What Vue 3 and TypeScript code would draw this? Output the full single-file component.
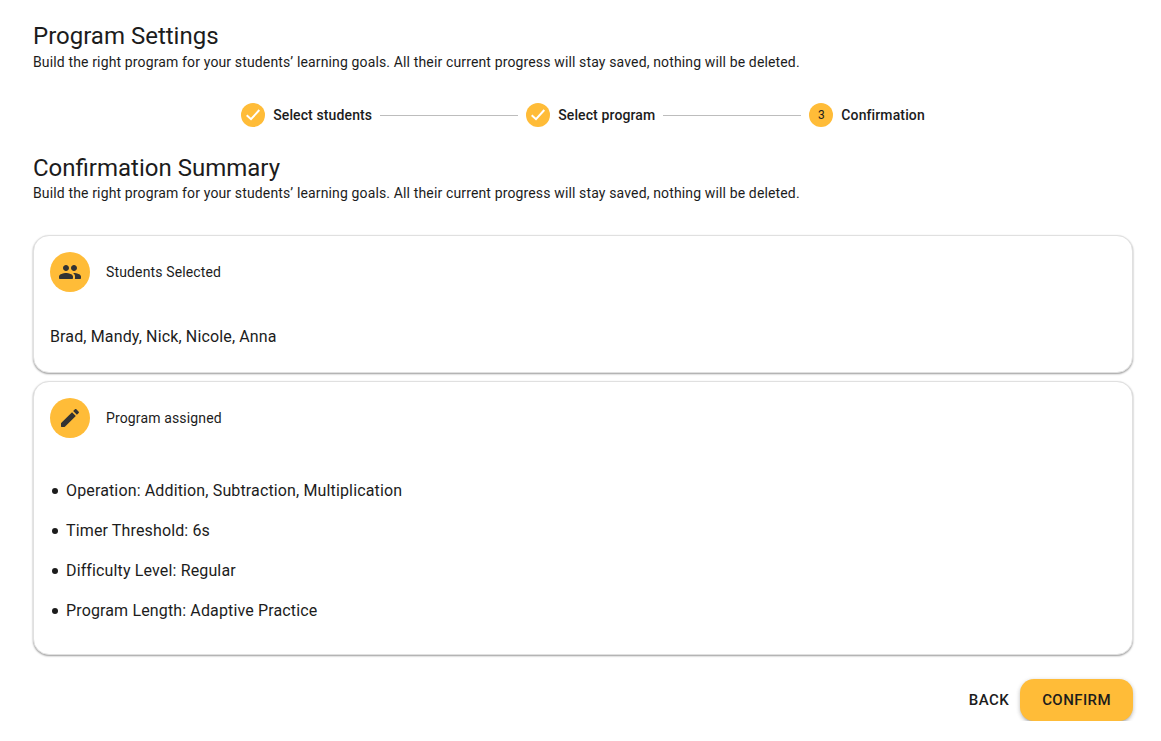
<script setup lang="ts">
const subtitle = 'Build the right program for your students’ learning goals. All their current progress will stay saved, nothing will be deleted.'
const students = ['Brad', 'Mandy', 'Nick', 'Nicole', 'Anna']
const details = [
  'Operation: Addition, Subtraction, Multiplication',
  'Timer Threshold: 6s',
  'Difficulty Level: Regular',
  'Program Length: Adaptive Practice',
]
</script>

<template>
  <main class="page">
    <h1 class="title">Program Settings</h1>
    <p class="sub">{{ subtitle }}</p>

    <div class="stepper">
      <div class="step">
        <span class="dot"><svg viewBox="0 0 24 24" width="24" height="24"><path d="M5.7 12.2 10 16.2 18.3 7" fill="none" stroke="#fff" stroke-width="2" /></svg></span>
        <span class="label">Select students</span>
      </div>
      <span class="line"></span>
      <div class="step">
        <span class="dot"><svg viewBox="0 0 24 24" width="24" height="24"><path d="M5.7 12.2 10 16.2 18.3 7" fill="none" stroke="#fff" stroke-width="2" /></svg></span>
        <span class="label">Select program</span>
      </div>
      <span class="line"></span>
      <div class="step">
        <span class="dot num">3</span>
        <span class="label">Confirmation</span>
      </div>
    </div>

    <h2 class="title">Confirmation Summary</h2>
    <p class="sub sub-tight">{{ subtitle }}</p>

    <section class="card first">
      <header class="card-head">
        <span class="avatar">
          <svg viewBox="0 0 24 24" width="24" height="24"><path d="M16 11c1.66 0 2.99-1.34 2.99-3S17.66 5 16 5s-3 1.34-3 3 1.34 3 3 3zm-8 0c1.66 0 2.99-1.34 2.99-3S9.66 5 8 5 5 6.34 5 8s1.34 3 3 3zm0 2c-2.33 0-7 1.17-7 3.5V18c0 .55.45 1 1 1h12c.55 0 1-.45 1-1v-1.5c0-2.33-4.67-3.5-7-3.5zm8 0c-.29 0-.62.02-.97.05.02.01.03.03.04.04 1.14.83 1.93 1.94 1.93 3.41V18c0 .35-.07.69-.18 1H22c.55 0 1-.45 1-1v-1.5c0-2.33-4.67-3.5-7-3.5z" fill="#333" /></svg>
        </span>
        <span class="card-title">Students Selected</span>
      </header>
      <p class="names">{{ students.join(', ') }}</p>
    </section>

    <section class="card second">
      <header class="card-head">
        <span class="avatar">
          <svg viewBox="0 0 24 24" width="24" height="24"><path d="M3 17.46v3.04c0 .28.22.5.5.5h3.04c.13 0 .26-.05.35-.15L17.81 9.94l-3.75-3.75L3.15 17.1c-.1.1-.15.22-.15.36zM20.71 7.04c.39-.39.39-1.02 0-1.41l-2.34-2.34c-.39-.39-1.02-.39-1.41 0l-1.83 1.83 3.75 3.75 1.83-1.83z" fill="#333" /></svg>
        </span>
        <span class="card-title">Program assigned</span>
      </header>
      <ul class="list">
        <li v-for="d in details" :key="d">{{ d }}</li>
      </ul>
    </section>

    <footer class="actions">
      <button type="button" class="btn-back">BACK</button>
      <button type="button" class="btn-confirm">CONFIRM</button>
    </footer>
  </main>
</template>

<style scoped>
.page {
  padding: 21px 28px 0 33px;
  font-family: Roboto, "Liberation Sans", sans-serif;
  color: #1c1c1c;
}
.title {
  margin: 0;
  font-size: 24px;
  font-weight: 400;
  line-height: 30px;
}
.sub {
  margin: 2px 0 0;
  font-size: 14px;
  line-height: 18px;
  letter-spacing: .14px;
}
.sub-tight {
  margin-top: 1px;
}
.stepper {
  display: flex;
  align-items: center;
  justify-content: center;
  margin: 32px 0 26px;
  height: 24px;
}
.step {
  display: flex;
  align-items: center;
  gap: 8px;
  padding: 0 8px;
}
.dot {
  width: 24px;
  height: 24px;
  border-radius: 50%;
  background: #ffbc38;
  display: flex;
  align-items: center;
  justify-content: center;
}
.num {
  font-size: 12px;
}
.label {
  font-size: 14px;
  font-weight: 500;
  letter-spacing: .12px;
}
.line {
  width: 138px;
  border-top: 1px solid #bdbdbd;
}
.card {
  border: 1px solid #e0e0e0;
  border-radius: 16px;
  background: #fff;
  padding: 16px;
  box-shadow: 0 1px 2px rgba(0, 0, 0, .4);
}
.first {
  margin-top: 33px;
  height: 138px;
  box-sizing: border-box;
}
.second {
  margin-top: 8px;
  height: 274px;
  box-sizing: border-box;
}
.card-head {
  display: flex;
  align-items: center;
  gap: 16px;
}
.avatar {
  width: 40px;
  height: 40px;
  border-radius: 50%;
  background: #ffbc38;
  display: flex;
  align-items: center;
  justify-content: center;
}
.card-title {
  font-size: 14px;
  letter-spacing: .14px;
}
.names {
  margin: 33px 0 0;
  font-size: 16px;
  line-height: 24px;
  letter-spacing: .14px;
}
.list {
  margin: 41px 0 0;
  padding: 0;
  list-style: none;
  font-size: 16px;
  letter-spacing: .14px;
}
.list li {
  display: flex;
  align-items: center;
  gap: 8px;
  padding-left: 2px;
  line-height: 24px;
  margin-bottom: 16px;
}
.list li::before {
  content: '';
  width: 6px;
  height: 6px;
  border-radius: 50%;
  background: currentColor;
}
.actions {
  display: flex;
  justify-content: flex-end;
  align-items: center;
  margin-top: 24px;
}
.btn-back,
.btn-confirm {
  font: 500 15px Roboto, "Liberation Sans", sans-serif;
  letter-spacing: .43px;
  border: 0;
  height: 42px;
  color: #1c1c1c;
}
.btn-back {
  background: none;
  padding: 0 11px;
}
.btn-confirm {
  background: #ffbc38;
  padding: 0 22px;
  border-radius: 14px;
  box-shadow: 0 3px 3px -2px rgba(0, 0, 0, .2), 0 2px 4px rgba(0, 0, 0, .14), 0 1px 5px rgba(0, 0, 0, .12);
}
</style>
